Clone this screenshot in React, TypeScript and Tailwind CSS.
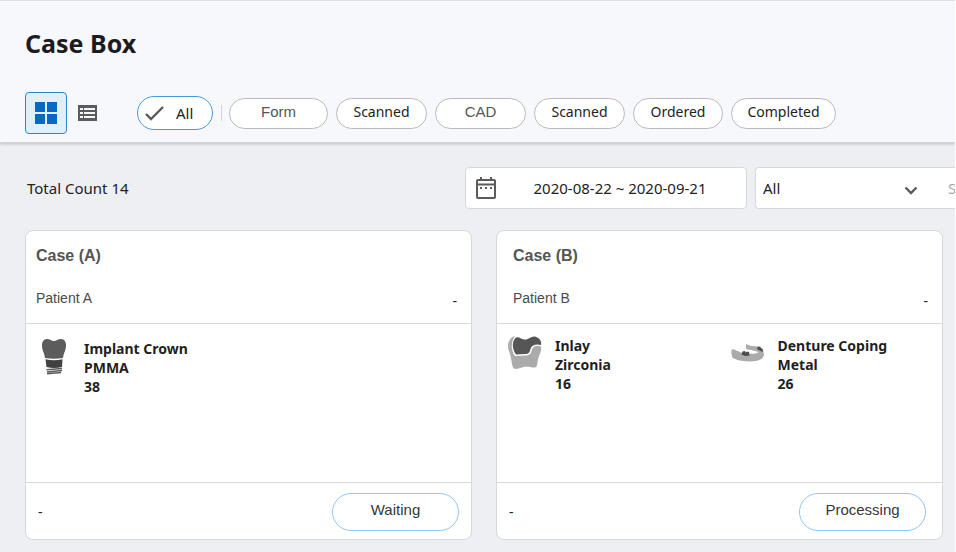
import { FC, ReactNode, useState } from "react";

const noto = "font-['Noto_Sans',sans-serif]";
const arial = "font-['Liberation_Sans',sans-serif]";

interface Item {
  icon: ReactNode;
  name: string;
  material: string;
  tooth: number;
}

interface CaseProps {
  title: string;
  patient: string;
  status: string;
  items: Item[];
  headClass: string;
  bodyClass: string;
  footClass: string;
}

const CrownIcon = () => (
  <svg width="34" height="36" viewBox="0 0 34 36" aria-hidden="true">
    <path
      d="M10 0C6.500 0 4.800 3 5 7C5.200 12 7.500 14 8 19Q17 20.500 26 19C26.500 14 28.800 12 29 7C29.300 3 27.500 0 24 0C21 0 19.500 2 17 2C14.500 2 13 0 10 0Z"
      fill="#5c5c5c"
    />
    <path d="M8.500 20.300Q17 22 25.500 20.300L25 28Q17 30 9.500 28Z" fill="#414141" />
    <path d="M9.500 30.800L25 29.500M10 33L25 31.500M10 34.700L24 33.500" stroke="#5c5c5c" strokeWidth="1.400" fill="none" />
  </svg>
);

const InlayIcon = () => (
  <svg width="34" height="34" viewBox="0 0 34 34" aria-hidden="true">
    <path
      d="M7 0C3 1 0 5 0 10C0 14 2 17 3 22C4 28 4 33 8 33C12 33 14 30.500 18 30.500C22 30.500 24 32 27 31.500C30 31 29 25 31 20C33 16 33.500 13 33 10.500C29 9 25 10 24 13.500C23 18 21 19.500 17 19.500L7 20C3 15 2.500 6 7 0Z"
      fill="#ababab"
    />
    <path
      d="M7 2.500C10 -1 13 3.500 17 3.500C21 3.500 23 0 27 0.500C31 1.500 34 5 33 9C28 7.500 23.500 9 22.500 13C21.500 17 20.500 18 17 18L8 18.500C4.500 14 3.500 7 7 2.500Z"
      fill="#565656"
    />
  </svg>
);

const DentureIcon = () => (
  <svg width="34" height="34" viewBox="0 0 34 34" aria-hidden="true">
    <path
      d="M15 8L20 10L28 10.500Q33 13 33 19Q32 23 27 24.500Q20 26 12 25Q4 24 1 21Q0 17 0.500 14Q1 13 3 13.500L10 16.500Q17 18.500 24 17.500Q29 16.500 26 15.500L20 14L15 13Z"
      fill="#ababab"
    />
    <path
      d="M10.500 18.500L11.500 15.500L14 15L14.700 16.500L16 15.500L18 16L18.500 19.500L14 20ZM26 13L27 10.500L29.500 11L30 12.500L31.500 12.500L32 16L29.500 15Z"
      fill="#4d4d4d"
    />
  </svg>
);

const CaseCard: FC<CaseProps> = ({ title, patient, status, items, headClass, bodyClass, footClass }) => (
  <article className="flex flex-col rounded-lg border border-[#d6d8dd] bg-white">
    <header className={`border-b border-[#d6d8dd] pt-[13px] pr-3.5 pb-3 ${headClass}`}>
      <h2 className={`${arial} text-base leading-6 font-bold text-[#555]`}>{title}</h2>
      <div className="mt-[18px] flex justify-between">
        <p className={`${arial} text-sm leading-6 text-[#4a4a4a]`}>{patient}</p>
        <span className="pt-[5px] text-sm leading-5">-</span>
      </div>
    </header>
    <ul className={`grid h-[158px] grid-cols-2 content-start gap-x-[11px] pl-[11px] ${bodyClass}`}>
      {items.map((item) => (
        <li key={item.name} className="flex gap-[13px]">
          {item.icon}
          <p className="text-sm leading-[19px] font-bold text-[#1f1f1f]">
            {item.name}
            <br />
            {item.material}
            <br />
            {item.tooth}
          </p>
        </li>
      ))}
    </ul>
    <footer className={`flex items-center justify-between border-t border-[#d6d8dd] pt-2.5 pb-2 pl-3 ${footClass}`}>
      <span className="text-sm">-</span>
      <button
        type="button"
        className={`${arial} h-[38px] w-[127px] rounded-full border border-[#90c8f5] pb-1 text-[15px] text-[#333840]`}
      >
        {status}
      </button>
    </footer>
  </article>
);

const filters = [
  { id: "form", label: "Form", style: `${arial} w-[99px] text-[15px] text-[#555]` },
  { id: "scanned", label: "Scanned", style: "w-[91px] text-sm" },
  { id: "cad", label: "CAD", style: `${arial} w-[91px] text-[15px] text-[#555]` },
  { id: "scanned2", label: "Scanned", style: "w-[91px] text-sm" },
  { id: "ordered", label: "Ordered", style: "w-[90px] text-sm" },
  { id: "completed", label: "Completed", style: "w-[105px] text-sm" },
];

const App: FC = () => {
  const [search, setSearch] = useState<string>("");
  const [field, setField] = useState<string>("all");

  return (
    <div className={`${noto} overflow-hidden border-r border-b border-white bg-[#eeeff3] text-[#222]`}>
      <header className="relative border-t border-b border-t-[#dfe1e5] border-b-[#cfd1d2] bg-[#f7f8fc] pt-6 pb-2 pl-[25px] shadow-[0_1px_3px_rgba(0,0,0,0.2)]">
        <h1 className="text-[25px] leading-9 font-bold text-[#1c1c1e]">Case Box</h1>
        <div className="mt-[31px] flex items-center">
          <button
            type="button"
            aria-label="Grid view"
            className="flex size-[42px] items-center justify-center rounded border border-[#2b86d2] bg-[#e0f0fb]"
          >
            <svg width="22" height="22" viewBox="0 0 22 22" fill="#0669c6">
              <path d="M0 0h10v10H0zM12 0h10v10H12zM0 12h10v10H0zM12 12h10v10H12z" />
            </svg>
          </button>
          <button type="button" aria-label="List view" className="ml-[11px]">
            <svg width="19" height="16" viewBox="0 0 19 16">
              <path d="M0 0h19v16H0z" fill="#5b5b5d" />
              <path d="M2 3h3v2H2zM6 3h11v2H6zM2 7h3v2H2zM6 7h11v2H6zM2 11h3v2H2zM6 11h11v2H6z" fill="#f7f8fc" />
            </svg>
          </button>
          <button
            type="button"
            className="ml-10 flex h-[34px] w-[76px] items-center gap-3 rounded-full border border-[#4a99dc] bg-white pl-[7px] text-[15px]"
          >
            <svg width="19" height="15" viewBox="0 0 19 15" fill="none" stroke="#5b5b5d" strokeWidth="2.400">
              <path d="M1 8l5 5L18 1" />
            </svg>
            All
          </button>
          <span className="mr-[7px] ml-2 h-4 w-px bg-[#d3d5d9]" />
          <div className="flex gap-2">
            {filters.map((f) => (
              <button
                key={f.id}
                type="button"
                className={`h-[31px] rounded-full border border-[#b9bac0] bg-white pb-0.5 ${f.style}`}
              >
                {f.label}
              </button>
            ))}
          </div>
        </div>
      </header>

      <main className="pt-6 pr-3 pb-3 pl-[25px]">
        <div className="-mr-3 flex items-center gap-2">
          <p className="w-[432px] pl-0.5 text-[15px]">Total Count 14</p>
          <button
            type="button"
            className="flex h-[42px] w-[282px] items-center rounded border border-[#d6d8dd] bg-white pl-2.5"
          >
            <svg width="20" height="22" viewBox="0 0 20 22" fill="none" stroke="#5b5b5d" strokeWidth="2">
              <rect x="1" y="3" width="18" height="18" rx="1" />
              <path d="M1 7.500h18M5 0v3M15 0v3" />
              <path d="M4 11h2M9 11h2M14 11h2" />
            </svg>
            <span className="grow pr-0.5 text-center text-[15px]">2020-08-22 ~ 2020-09-21</span>
          </button>
          <div className="flex h-[42px] min-w-0 flex-1 rounded-l border border-r-0 border-[#d6d8dd] bg-white">
            <div className="relative w-[184px] shrink-0">
              <select
                aria-label="Search field"
                value={field}
                onChange={(e) => setField(e.target.value)}
                className="h-full w-full appearance-none pl-[7px] text-[15px]"
              >
                <option value="all">All</option>
              </select>
              <svg
                className="pointer-events-none absolute top-[18px] right-[22px]"
                width="14"
                height="9"
                viewBox="0 0 14 9"
                fill="none"
                stroke="#5b5b5d"
                strokeWidth="2.400"
              >
                <path d="M1.500 1.500L7 7l5.500-5.500" />
              </svg>
            </div>
            <input
              type="text"
              aria-label="Search"
              placeholder="Search"
              value={search}
              onChange={(e) => setSearch(e.target.value)}
              className="w-40 min-w-0 pl-2 text-[15px] placeholder:text-[#aaa]"
            />
          </div>
        </div>

        <div className="mt-[21px] grid grid-cols-2 gap-6">
          <CaseCard
            title="Case (A)"
            patient="Patient A"
            status="Waiting"
            headClass="pl-2.5"
            bodyClass="pt-[15px]"
            footClass="pr-3"
            items={[{ icon: <CrownIcon />, name: "Implant Crown", material: "PMMA", tooth: 38 }]}
          />
          <CaseCard
            title="Case (B)"
            patient="Patient B"
            status="Processing"
            headClass="pl-4"
            bodyClass="pt-3"
            footClass="pr-4"
            items={[
              { icon: <InlayIcon />, name: "Inlay", material: "Zirconia", tooth: 16 },
              { icon: <DentureIcon />, name: "Denture Coping", material: "Metal", tooth: 26 },
            ]}
          />
        </div>
      </main>
    </div>
  );
};

export default App;
